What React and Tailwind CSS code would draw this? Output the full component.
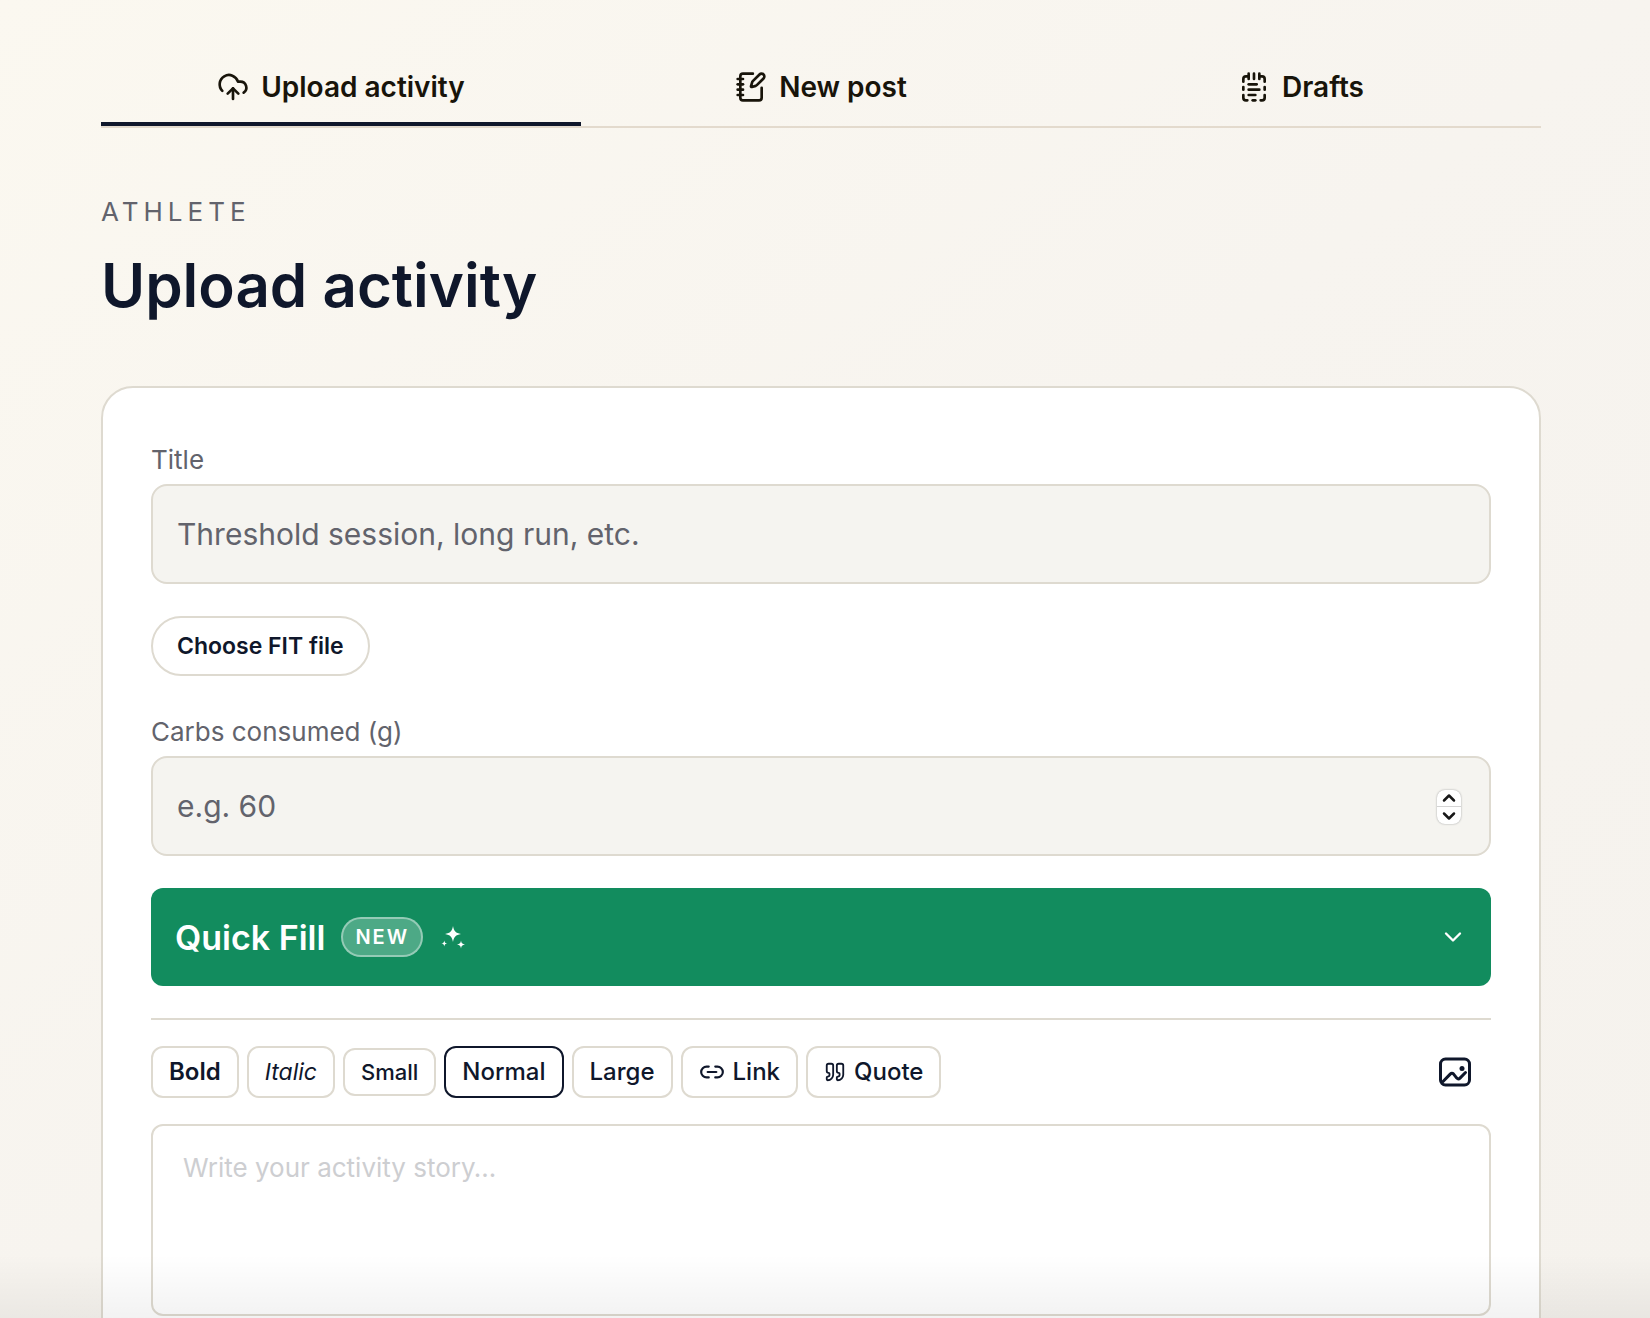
import { useState } from 'react';
import { ChevronDown, ChevronUp, CloudUpload, Link2, NotebookPen, NotepadTextDashed, Quote } from 'lucide-react';
import clsx from 'clsx';

const tabs = [
  { id: 'upload', label: 'Upload activity', icon: CloudUpload },
  { id: 'post', label: 'New post', icon: NotebookPen },
  { id: 'drafts', label: 'Drafts', icon: NotepadTextDashed },
];

const sizes = ['Small', 'Normal', 'Large'];

const toolClass = 'flex h-[52px] items-center gap-2 rounded-xl border-2 bg-white px-4 leading-8';

function Sparkles() {
  return (
    <svg className="size-6" viewBox="0 0 24 24" fill="currentColor" aria-hidden="true">
      <path d="M12 1c.9 5.2 2.600 7 8 8-5.400 1-7.100 2.800-8 8-.9-5.200-2.600-7-8-8 5.400-1 7.100-2.800 8-8z" />
      <path d="M20 15.500c.4 2.600 1.200 3.500 4 4-2.800.5-3.600 1.400-4 4-.4-2.600-1.200-3.500-4-4 2.800-.5 3.600-1.400 4-4z" />
      <path d="M3.300 15.500c.3 2 1 2.700 3 3-2 .3-2.700 1-3 3-.3-2-1-2.700-3-3 2-.3 2.700-1 3-3z" />
    </svg>
  );
}

function ImageIcon() {
  return (
    <svg className="h-[30px] w-8" viewBox="0 0 32 30" fill="none" stroke="currentColor" strokeWidth="3" strokeLinecap="round" strokeLinejoin="round" aria-hidden="true">
      <rect x="1.5" y="2" width="29" height="26" rx="5" />
      <path d="M4 24.500l7.200-7.400c1.200-1.200 2.300-1.200 3.400 0l3.200 4c1.100 1.200 2 1.200 3.200 0l5.500-5.600" />
      <circle cx="23" cy="11.500" r="2.500" fill="currentColor" stroke="none" />
    </svg>
  );
}

function Field({ id, label, children, ...props }) {
  return (
    <div>
      <label htmlFor={id} className="block text-[26px] leading-10 text-[#62636c]">{label}</label>
      <div className="relative mt-1">
        <input
          id={id}
          className="block h-[100px] w-full appearance-none rounded-2xl border-2 border-[#dedad0] bg-[#f5f4f0] px-6 text-[30px] text-slate-900 outline-none placeholder:text-[#62636c] [&::-webkit-inner-spin-button]:appearance-none"
          {...props}
        />
        {children}
      </div>
    </div>
  );
}

export default function App() {
  const [tab, setTab] = useState('upload');
  const [size, setSize] = useState('Normal');
  const [carbs, setCarbs] = useState('');
  const step = (n) => setCarbs(String(Math.max(0, Number(carbs) + n)));

  return (
    <div className="relative h-screen overflow-hidden bg-linear-to-br from-[#fbf8f0] via-[#f7f4ef] to-[#f5f2ed] pr-[109px] pl-[101px] font-['Inter',sans-serif] text-slate-900">
      <nav className="grid grid-cols-3 border-b-2 border-[#e3dacd] pt-12">
        {tabs.map(({ id, label, icon: Icon }) => (
          <button
            key={id}
            type="button"
            onClick={() => setTab(id)}
            className={clsx(
              'flex h-[78px] items-center justify-center gap-3 border-b-4 pt-1 text-[28px] font-semibold text-[#18140a]',
              tab === id ? 'border-slate-900' : 'border-transparent',
            )}
          >
            <Icon className="size-8" />
            {label}
          </button>
        ))}
      </nav>

      <header className="pt-16">
        <p className="text-[26px] leading-10 tracking-[5px] text-[#62636c] uppercase">Athlete</p>
        <h1 className="mt-4 text-[60px] leading-[74px] font-semibold">Upload activity</h1>
      </header>

      <form className="mt-16 rounded-[32px] border-2 border-[#dedad0] bg-white px-12 pt-[52px] pb-24" onSubmit={(e) => e.preventDefault()}>
        <Field id="title" label="Title" placeholder="Threshold session, long run, etc." />

        <button type="button" className="mt-8 flex h-[60px] items-center rounded-full border-2 border-[#dedad0] px-6 text-[23px] font-semibold">
          Choose FIT file
        </button>

        <div className="mt-9">
          <Field id="carbs" label="Carbs consumed (g)" type="number" placeholder="e.g. 60" value={carbs} onChange={(e) => setCarbs(e.target.value)}>
            <div className="absolute top-[34px] right-[30px] flex w-6 flex-col overflow-hidden rounded-lg bg-white text-neutral-900 shadow-[0_0_2px_#999]">
              <button type="button" aria-label="Increase" onClick={() => step(1)} className="flex h-[17px] items-center justify-center border-b border-neutral-300">
                <ChevronUp className="size-5" strokeWidth={3} />
              </button>
              <button type="button" aria-label="Decrease" onClick={() => step(-1)} className="flex h-[17px] items-center justify-center">
                <ChevronDown className="size-5" strokeWidth={3} />
              </button>
            </div>
          </Field>
        </div>

        <button type="button" className="mt-8 flex h-[98px] w-full items-center rounded-xl bg-[#128c5e] px-6 text-white">
          <span className="text-[34px] font-semibold">Quick Fill</span>
          <span className="ml-4 flex h-10 items-center rounded-full border-2 border-white/40 bg-white/25 px-3 text-[20px] font-semibold tracking-[2px]">NEW</span>
          <span className="ml-[18px]"><Sparkles /></span>
          <ChevronDown className="ml-auto size-7" />
        </button>

        <div className="mt-8 border-t-2 border-[#dedad0] pt-[26px]">
          <div className="flex items-center gap-2">
            <button type="button" className={clsx(toolClass, 'border-[#dedad0] text-[24px] font-semibold')}>Bold</button>
            <button type="button" className={clsx(toolClass, 'border-[#dedad0] text-[23px] italic')}>Italic</button>
            {sizes.map((s) => (
              <button
                key={s}
                type="button"
                onClick={() => setSize(s)}
                className={clsx(
                  'rounded-xl border-2 bg-white px-4 font-medium',
                  s === 'Small' ? 'h-12 text-[22px]' : 'h-[52px] text-[24px]',
                  s === size ? 'border-slate-900' : 'border-[#dedad0]',
                )}
              >
                {s}
              </button>
            ))}
            <button type="button" className={clsx(toolClass, 'border-[#dedad0] text-[24px] font-medium')}>
              <Link2 className="size-[26px]" />
              Link
            </button>
            <button type="button" className={clsx(toolClass, 'border-[#dedad0] text-[24px] font-medium')}>
              <Quote className="size-[22px]" />
              Quote
            </button>
            <button type="button" aria-label="Add image" className="ml-auto flex h-[52px] items-center px-5">
              <ImageIcon />
            </button>
          </div>
          <textarea
            aria-label="Activity story"
            placeholder="Write your activity story…"
            className="mt-[26px] block h-48 w-full resize-none rounded-xl border-2 border-[#dedad0] px-[30px] py-[22px] text-[26px] leading-10 outline-none placeholder:text-[#cdced1]"
          />
        </div>
      </form>

      {/* soft shade over the bottom edge of the viewport */}
      <div className="pointer-events-none absolute inset-x-0 bottom-0 h-16 bg-linear-to-b from-transparent to-black/5" />
    </div>
  );
}
